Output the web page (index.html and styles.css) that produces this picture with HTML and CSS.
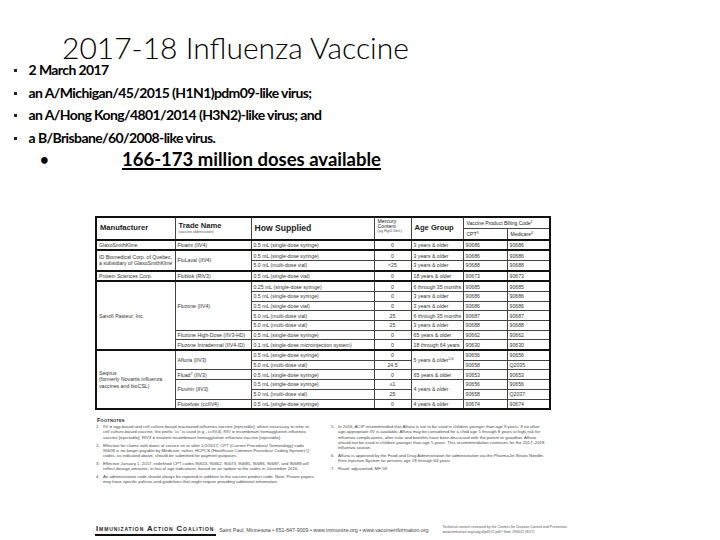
FILE: index.html
```html
<!DOCTYPE html>
<html lang="en">
<head>
<meta charset="utf-8">
<title>2017-18 Influenza Vaccine</title>
<link rel="stylesheet" href="styles.css">
</head>
<body>
<div class="slide">
  <h1 class="title">2017-18 Influenza Vaccine</h1>
  <ul class="points">
    <li>2 March 2017</li>
    <li>an A/Michigan/45/2015 (H1N1)pdm09-like virus;</li>
    <li>an A/Hong Kong/4801/2014 (H3N2)-like virus; and</li>
    <li>a B/Brisbane/60/2008-like virus.</li>
  </ul>
  <div class="doses"><span class="dot">•</span><span class="doses-text">166-173 million doses available</span></div>

  <div class="sheet">
    <table class="products">
      <colgroup>
        <col class="w-man"><col class="w-trade"><col class="w-how"><col class="w-hg"><col class="w-age"><col class="w-cpt"><col class="w-med">
      </colgroup>
      <thead>
        <tr class="h1">
          <th rowspan="2" class="hd">Manufacturer</th>
          <th rowspan="2" class="hd">Trade Name<span class="sub">(vaccine abbreviation)</span></th>
          <th rowspan="2" class="hd big">How Supplied</th>
          <th rowspan="2" class="hd small">Mercury<br>Content<span class="sub">(µg Hg/0.5mL)</span></th>
          <th rowspan="2" class="hd">Age Group</th>
          <th colspan="2" class="hd tiny">Vaccine Product Billing Code<sup>2</sup></th>
        </tr>
        <tr class="h2">
          <th class="hd tiny">CPT<sup>3</sup></th>
          <th class="hd tiny">Medicare<sup>4</sup></th>
        </tr>
      </thead>
      <tbody>
        <tr class="grp">
          <td>GlaxoSmithKline</td><td>Fluarix (IIV4)</td><td>0.5 mL (single-dose syringe)</td><td class="c">0</td><td>3 years &amp; older</td><td>90686</td><td>90686</td>
        </tr>
        <tr class="grp">
          <td rowspan="2" class="wrap">ID Biomedical Corp. of Quebec,<br>a subsidiary of GlaxoSmithKline</td><td rowspan="2">FluLaval (IIV4)</td><td>0.5 mL (single-dose syringe)</td><td class="c">0</td><td>3 years &amp; older</td><td>90686</td><td>90686</td>
        </tr>
        <tr>
          <td>5.0 mL (multi-dose vial)</td><td class="c">&lt;25</td><td>3 years &amp; older</td><td>90688</td><td>90688</td>
        </tr>
        <tr class="grp">
          <td>Protein Sciences Corp.</td><td>Flublok (RIV3)</td><td>0.5 mL (single-dose vial)</td><td class="c">0</td><td>18 years &amp; older</td><td>90673</td><td>90673</td>
        </tr>
        <tr class="grp">
          <td rowspan="7">Sanofi Pasteur, Inc.</td><td rowspan="5">Fluzone (IIV4)</td><td>0.25 mL (single-dose syringe)</td><td class="c">0</td><td>6 through 35 months</td><td>90685</td><td>90685</td>
        </tr>
        <tr>
          <td>0.5 mL (single-dose syringe)</td><td class="c">0</td><td>3 years &amp; older</td><td>90686</td><td>90686</td>
        </tr>
        <tr>
          <td>0.5 mL (single-dose vial)</td><td class="c">0</td><td>3 years &amp; older</td><td>90686</td><td>90686</td>
        </tr>
        <tr>
          <td>5.0 mL (multi-dose vial)</td><td class="c">25</td><td>6 through 35 months</td><td>90687</td><td>90687</td>
        </tr>
        <tr>
          <td>5.0 mL (multi-dose vial)</td><td class="c">25</td><td>3 years &amp; older</td><td>90688</td><td>90688</td>
        </tr>
        <tr>
          <td>Fluzone High-Dose (IIV3-HD)</td><td>0.5 mL (single-dose syringe)</td><td class="c">0</td><td>65 years &amp; older</td><td>90662</td><td>90662</td>
        </tr>
        <tr class="mid">
          <td>Fluzone Intradermal (IIV4-ID)</td><td>0.1 mL (single-dose microinjection system)</td><td class="c">0</td><td>18 through 64 years</td><td>90630</td><td>90630</td>
        </tr>
        <tr class="grp">
          <td rowspan="6" class="wrap">Seqirus<br>(formerly Novartis influenza<br>vaccines and bioCSL)</td><td rowspan="2">Afluria (IIV3)</td><td>0.5 mL (single-dose syringe)</td><td class="c">0</td><td rowspan="2">5 years &amp; older<sup>5,6</sup></td><td>90656</td><td>90656</td>
        </tr>
        <tr>
          <td>5.0 mL (multi-dose vial)</td><td class="c">24.5</td><td>90658</td><td>Q2035</td>
        </tr>
        <tr>
          <td>Fluad<sup>7</sup> (IIV3)</td><td>0.5 mL (single-dose syringe)</td><td class="c">0</td><td>65 years &amp; older</td><td>90653</td><td>90653</td>
        </tr>
        <tr>
          <td rowspan="2">Fluvirin (IIV3)</td><td>0.5 mL (single-dose syringe)</td><td class="c">≤1</td><td rowspan="2">4 years &amp; older</td><td>90656</td><td>90656</td>
        </tr>
        <tr>
          <td>5.0 mL (multi-dose vial)</td><td class="c">25</td><td>90658</td><td>Q2037</td>
        </tr>
        <tr>
          <td>Flucelvax (ccIIV4)</td><td>0.5 mL (single-dose syringe)</td><td class="c">0</td><td>4 years &amp; older</td><td>90674</td><td>90674</td>
        </tr>
      </tbody>
    </table>

    <div class="notes-head">Footnotes</div>
    <div class="notes">
      <ol class="note-col">
        <li><span class="n">1.</span><span>IIV = egg-based and cell culture-based inactivated influenza vaccine [injectable]; where necessary to refer to cell culture-based vaccine, the prefix “cc” is used (e.g., ccIIV4). RIV = recombinant hemagglutinin influenza vaccine [injectable]; RIV3 = trivalent recombinant hemagglutinin influenza vaccine [injectable].</span></li>
        <li><span class="n">2.</span><span>Effective for claims with dates of service on or after 1/1/2017, CPT (Current Procedural Terminology) code 90658 is no longer payable by Medicare; rather, HCPCS (Healthcare Common Procedure Coding System) Q codes, as indicated above, should be submitted for payment purposes.</span></li>
        <li><span class="n">3.</span><span>Effective January 1, 2017, redefined CPT codes 90653, 90662, 90673, 90685, 90686, 90687, and 90688 will reflect dosage amounts, in lieu of age indications, based on an update to the codes in December 2016.</span></li>
        <li><span class="n">4.</span><span>An administration code should always be reported in addition to the vaccine product code. Note: Private payers may have specific policies and guidelines that might require providing additional information.</span></li>
      </ol>
      <ol class="note-col">
        <li><span class="n">5.</span><span>In 2016, ACIP recommended that Afluria is not to be used in children younger than age 9 years. If no other age-appropriate IIV is available, Afluria may be considered for a child age 5 through 8 years at high risk for influenza complications, after risks and benefits have been discussed with the parent or guardian. Afluria should not be used in children younger than age 5 years. This recommendation continues for the 2017–2018 influenza season.</span></li>
        <li><span class="n">6.</span><span>Afluria is approved by the Food and Drug Administration for administration via the PharmaJet Stratis Needle-Free Injection System for persons age 18 through 64 years.</span></li>
        <li><span class="n">7.</span><span>Fluad: adjuvanted, MF-59.</span></li>
      </ol>
    </div>

    <div class="footer">
      <span class="iac">Immunization Action Coalition</span>
      <span class="contact">Saint Paul, Minnesota • 651-647-9009 • www.immunize.org • www.vaccineinformation.org</span>
      <span class="bar"></span>
      <span class="credit">Technical content reviewed by the Centers for Disease Control and Prevention<br>www.immunize.org/catg.d/p4072.pdf • Item #P4072 (8/17)</span>
    </div>
  </div>
</div>
</body>
</html>
```

FILE: styles.css
```css
html, body {
  margin: 0;
  padding: 0;
  background: #ffffff;
}

.slide {
  width: 720px;
  height: 540px;
  overflow: hidden;
  background: #ffffff;
  color: #000000;
  font-family: Lato, "Open Sans", sans-serif;
}

.title {
  margin: 0;
  padding: 35px 0 0 62px;
  font-family: Lato, sans-serif;
  font-weight: 300;
  font-size: 30px;
  line-height: 24px;
  color: #000;
  white-space: nowrap;
}

.points {
  list-style: none;
  margin: 0;
  padding: 0;
}

.points li {
  font-family: Lato, sans-serif;
  font-weight: 700;
  font-size: 14px;
  letter-spacing: -0.6px;
  line-height: 22.5px;
  white-space: nowrap;
}

.points li::before {
  content: "";
  display: inline-block;
  width: 3px;
  height: 3px;
  background: #222;
  margin: 0 11.6px 0 14px;
  vertical-align: 3px;
}

.doses {
  display: flex;
  margin-top: 0;
  padding-left: 40px;
  font-family: Lato, sans-serif;
  font-weight: 700;
  font-size: 18.5px;
  line-height: 21px;
}

.dot {
  width: 82px;
  font-size: 15px;
}

.doses-text {
  text-decoration: underline;
  text-decoration-thickness: 1.5px;
  text-underline-offset: 2px;
  white-space: nowrap;
}

/* ---------- embedded product sheet ---------- */

.sheet {
  margin: 46px 0 0 95px;
  width: 454px;
  font-family: "Liberation Sans", Arial, sans-serif;
}

.products {
  width: 454px;
  table-layout: fixed;
  border-collapse: collapse;
  border: 2px solid #111;
  font-size: 5.2px;
  color: #333;
}

.w-man { width: 79px; }
.w-trade { width: 76px; }
.w-how { width: 123px; }
.w-hg { width: 37px; }
.w-age { width: 52px; }
.w-cpt { width: 44px; }
.w-med { width: 43px; }

.products th,
.products td {
  border: 1px solid #444;
  padding: 0 2px;
  text-align: left;
  vertical-align: middle;
  white-space: nowrap;
  overflow: hidden;
}

.products td {
  height: 8.7px;
  line-height: 6px;
}

.products td.wrap {
  line-height: 6.5px;
}

.products td.c {
  text-align: center;
}

.products sup {
  font-size: 70%;
  line-height: 0;
  vertical-align: 2px;
}

.products thead tr.h1 th {
  height: 10px;
}

.products thead tr.h2 th {
  height: 9.5px;
  border-bottom: 2px solid #111;
}

.products th.hd {
  font-weight: 700;
  font-size: 7.6px;
  line-height: 8px;
  color: #222;
  padding: 0 3px;
}

.products th.big {
  font-size: 8.6px;
}

.products th.small {
  font-size: 5.2px;
  line-height: 5px;
  font-weight: 400;
  vertical-align: top;
  padding-top: 1px;
}

.products th.tiny {
  font-size: 5px;
  font-weight: 400;
  line-height: 6px;
}

.products th .sub {
  display: block;
  font-size: 3.6px;
  line-height: 4px;
  font-weight: 400;
  color: #555;
}

.products th.small .sub {
  font-size: 3.8px;
}

.products tr.grp td {
  border-top: 2px solid #111;
}

.products tr.mid td {
  border-top: 1.5px solid #222;
}

/* footnotes */

.notes-head {
  margin-top: 7px;
  padding-left: 2px;
  font-size: 5.6px;
  line-height: 7px;
  font-weight: 700;
  font-variant: small-caps;
  letter-spacing: 0.2px;
  color: #222;
}

.notes {
  display: grid;
  grid-template-columns: 1fr 1fr;
  column-gap: 16px;
}

.note-col {
  list-style: none;
  margin: 0;
  padding: 0;
}

.note-col li {
  display: flex;
  font-size: 4.3px;
  line-height: 5.3px;
  color: #444;
  margin-bottom: 2.5px;
}

.note-col .n {
  flex: none;
  width: 7px;
  padding-left: 1px;
}

/* footer */

.footer {
  display: flex;
  align-items: center;
  margin-top: 36px;
  height: 14px;
  white-space: nowrap;
}

.iac {
  font-size: 7.8px;
  font-weight: 700;
  font-variant: small-caps;
  letter-spacing: 0.9px;
  color: #222;
  border-bottom: 2px solid #111;
  line-height: 8px;
  padding: 0 2px 1px 1px;
}

.contact {
  margin-left: 3px;
  font-size: 5.3px;
  color: #444;
}

.bar {
  width: 2px;
  height: 10px;
  background: #222;
  margin: 0 6px 0 8px;
}

.credit {
  font-size: 3.6px;
  line-height: 5px;
  color: #555;
}
```
